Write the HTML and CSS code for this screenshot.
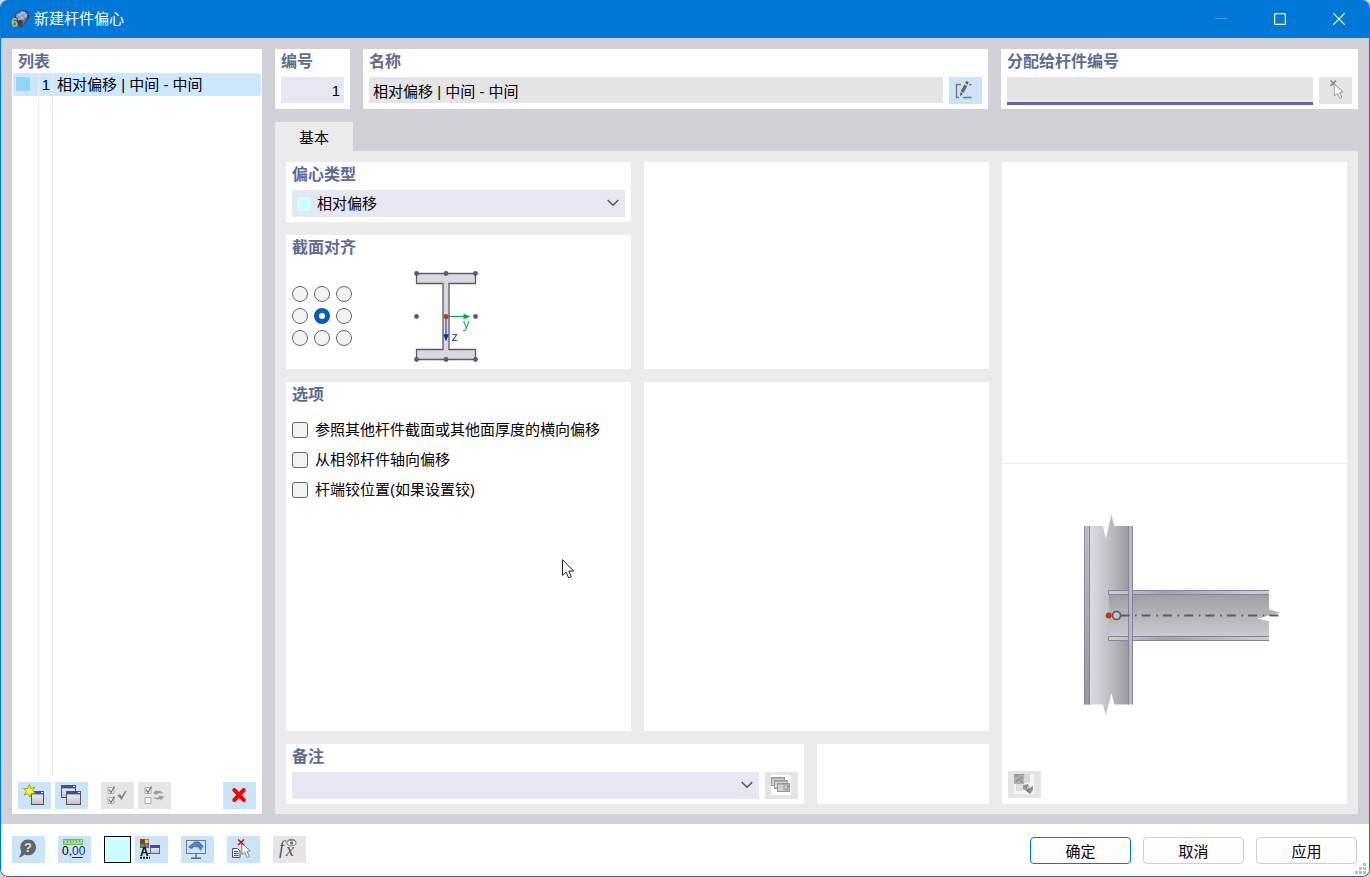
FILE: index.html
```html
<!DOCTYPE html>
<html lang="zh-CN">
<head>
    <meta charset="UTF-8">
    <meta name="viewport" content="width=device-width, initial-scale=1.0">
    <title>新建杆件偏心</title>
    <link rel="stylesheet" href="styles.css">
</head>
<body>
    <div class="window">
        <header class="titlebar">
            <svg class="app-icon" width="20" height="20" viewBox="0 0 20 20">
                <path d="M5 5L11.5 0.7L17.5 2.5L19.5 8L17 11.5L12 18.5L9 17L4.5 10Z" fill="#2d3f63"/>
                <path d="M6 5.5L12 1.8L16.5 3.5L17.5 8L13 11.5L8 11Z" fill="#8497bd"/>
                <path d="M8 4.5L14 10.5M11 2.5L17 7.5M6 8L15 3M8 11L17.5 5.5" stroke="#c3d0e6" stroke-width="0.8" fill="none"/>
                <path d="M13 11.5L17.5 8.5L15.5 12L12 17.5Z" fill="#6d7480"/>
                <text class="app-digit" x="1" y="18">6</text>
            </svg>
            <h1>新建杆件偏心</h1>
            <div class="window-controls">
                <button type="button" aria-label="最小化" disabled>
                    <svg width="12" height="12" viewBox="0 0 12 12"><path d="M0 5.5H12" stroke="#3d96df"/></svg>
                </button>
                <button type="button" aria-label="最大化">
                    <svg width="12" height="12" viewBox="0 0 12 12"><rect x="0.6" y="0.6" width="10.8" height="10.8" rx="1" fill="none" stroke="#fff" stroke-width="1.2"/></svg>
                </button>
                <button type="button" aria-label="关闭">
                    <svg width="12" height="12" viewBox="0 0 12 12"><path d="M0.3 0.3L11.7 11.7M11.7 0.3L0.3 11.7" stroke="#fff" stroke-width="1.2"/></svg>
                </button>
            </div>
        </header>

        <div class="content">
            <aside class="panel sidebar">
                <h2 class="panel-title">列表</h2>
                <ul class="list">
                    <li class="list-row">
                        <span class="cell-color"><i></i></span>
                        <span class="cell-no">1</span>
                        <span class="cell-name">相对偏移 | 中间 - 中间</span>
                    </li>
                </ul>
                <div class="list-tools">
                    <button type="button" class="icon-btn" aria-label="新建">
                        <svg viewBox="0 0 33 27">
                            <defs>
                                <linearGradient id="win" x1="0" y1="0" x2="0" y2="1">
                                    <stop offset="0" stop-color="#fafafa"/>
                                    <stop offset="1" stop-color="#c0c0c0"/>
                                </linearGradient>
                            </defs>
                            <rect x="13.5" y="9.5" width="12" height="13" fill="url(#win)" stroke="#555"/>
                            <rect x="13" y="9" width="13" height="3.4" fill="#3a50a8"/>
                            <rect x="23" y="10" width="2" height="1" fill="#fff"/>
                            <path d="M11.3 2.5L12.7 6.6L16.6 5L14.6 8.7L17.6 11.2L13.4 11.3L12 15L10.2 11.7L6.2 13L8.5 9.3L5.5 6.5L9.8 6.6Z" fill="#ffff20" stroke="#8c8c20" stroke-width="0.8"/>
                        </svg>
                    </button>
                    <button type="button" class="icon-btn" aria-label="复制">
                        <svg viewBox="0 0 33 27">
                            <rect x="6.5" y="3.5" width="14" height="12" fill="url(#win)" stroke="#555"/>
                            <rect x="6" y="3" width="15" height="3.4" fill="#3a50a8"/>
                            <rect x="18" y="4" width="2" height="1" fill="#fff"/>
                            <rect x="11.5" y="9.5" width="14" height="13" fill="url(#win)" stroke="#555"/>
                            <rect x="11" y="9" width="15" height="3.4" fill="#3a50a8"/>
                            <rect x="23" y="10" width="2" height="1" fill="#fff"/>
                        </svg>
                    </button>
                    <button type="button" class="icon-btn off gap-left" aria-label="全选" disabled>
                        <svg viewBox="0 0 33 27" fill="none">
                            <path d="M7 5.5H13V11.5H7ZM7 15.5H13V21.5H7Z" fill="#f4f4f4" stroke="#aaa"/>
                            <path d="M8 7.5L10 10.5L13.5 4.5M8 17.5L10 20.5L13.5 14.5" stroke="#777" stroke-width="1.3"/>
                            <path d="M16.5 13.5L19 12L20.5 14.5L24.5 8.5L25.5 9.5L20.5 18Z" fill="#858585"/>
                        </svg>
                    </button>
                    <button type="button" class="icon-btn off" aria-label="反选" disabled>
                        <svg viewBox="0 0 33 27" fill="none">
                            <path d="M7 5.5H13V11.5H7ZM7 15.5H13V21.5H7Z" fill="#f4f4f4" stroke="#aaa"/>
                            <path d="M8 7.5L10 10.5L13.5 4.5" stroke="#777" stroke-width="1.3"/>
                            <path d="M15 11.5L18.5 7.5V9.5C21 8.5 24 9 25 11.5C22.5 10.5 20.5 11 19 11.5L20.5 13Z" fill="#999"/>
                            <path d="M26 14.5L22.5 18.8V16.8C20 18 17 17.5 15.5 15C18 16 20 15.7 21.5 15L20 13.5Z" fill="#999"/>
                        </svg>
                    </button>
                    <button type="button" class="icon-btn push-right" aria-label="删除">
                        <svg viewBox="0 0 33 27"><path d="M11.3 8L20.8 18M20.8 8L11.3 18" stroke="#f00" stroke-width="4" stroke-linecap="round"/></svg>
                    </button>
                </div>
            </aside>

            <main class="main">
                <div class="top-row">
                    <section class="panel">
                        <label class="panel-title" for="number">编号</label>
                        <input class="field number" id="number" type="text" value="1">
                    </section>
                    <section class="panel">
                        <label class="panel-title" for="name">名称</label>
                        <div class="field-row">
                            <input class="field readonly" id="name" type="text" value="相对偏移 | 中间 - 中间" readonly>
                            <button type="button" class="icon-btn" aria-label="编辑名称">
                                <svg viewBox="0 0 33 27" fill="none">
                                    <path d="M12 7.5H7.5V20.5H10M14 20.5H22.5M20 7.5H22.5" stroke="#777" stroke-width="1.4"/>
                                    <path d="M15.5 7.5L18.3 9L14.5 16L11.6 14.3Z" fill="#666"/>
                                    <path d="M16.2 6L17.4 4L19.6 5.3L18.8 7.5ZM11.3 15.3L13.7 16.7L11.2 19.5Z" fill="#555"/>
                                </svg>
                            </button>
                        </div>
                    </section>
                    <section class="panel">
                        <label class="panel-title" for="assigned">分配给杆件编号</label>
                        <div class="field-row">
                            <input class="field readonly underlined" id="assigned" type="text">
                            <button type="button" class="icon-btn off" aria-label="选择杆件" disabled>
                                <svg viewBox="0 0 33 27">
                                    <path d="M11.5 3.5L17 9M17 3.5L11.5 9" stroke="#888" stroke-width="1.6"/>
                                    <path d="M15 7L15.5 19L18.3 16.5L21 21.5L23 20.3L20.5 15.5L24 15Z" fill="#fff" stroke="#999"/>
                                </svg>
                            </button>
                        </div>
                    </section>
                </div>

                <div class="tabs" role="tablist">
                    <button type="button" class="tab" role="tab" aria-selected="true">基本</button>
                </div>

                <div class="page">
                    <section class="panel type">
                        <label class="panel-title" for="type">偏心类型</label>
                        <div class="field select-box">
                            <i class="swatch"></i>
                            <select id="type"><option>相对偏移</option></select>
                            <svg class="chevron" width="12" height="8" viewBox="0 0 12 8"><path d="M0.7 1L6 6.3L11.3 1" fill="none" stroke="#555" stroke-width="1.4"/></svg>
                        </div>
                    </section>

                    <section class="panel align">
                        <h2 class="panel-title">截面对齐</h2>
                        <div class="align-body">
                            <div class="radio-grid" role="radiogroup" aria-label="截面对齐">
                                <input type="radio" name="align" aria-label="左上">
                                <input type="radio" name="align" aria-label="中上">
                                <input type="radio" name="align" aria-label="右上">
                                <input type="radio" name="align" aria-label="左中">
                                <input type="radio" name="align" aria-label="中间" checked>
                                <input type="radio" name="align" aria-label="右中">
                                <input type="radio" name="align" aria-label="左下">
                                <input type="radio" name="align" aria-label="中下">
                                <input type="radio" name="align" aria-label="右下">
                            </div>
                            <svg width="90" height="106" viewBox="0 0 90 106">
                                <path d="M16.5 10.5H75.5V20.5H49V86.5H75.5V96.5H16.5V86.5H43V20.5H16.5Z" fill="#dadade" stroke="#5c5a70" stroke-width="1.3"/>
                                <g fill="#5c5a70">
                                    <circle cx="16.5" cy="10.5" r="2.4"/><circle cx="46" cy="10.5" r="2.4"/><circle cx="75.5" cy="10.5" r="2.4"/>
                                    <circle cx="16.5" cy="53.5" r="2.4"/><circle cx="75.5" cy="53.5" r="2.4"/>
                                    <circle cx="16.5" cy="96.5" r="2.4"/><circle cx="46" cy="96.5" r="2.4"/><circle cx="75.5" cy="96.5" r="2.4"/>
                                </g>
                                <path d="M48 53.5H65" stroke="#00a84a" stroke-width="1.2"/>
                                <path d="M63.5 50.7L70.5 53.5L63.5 56.3Z" fill="#00a84a"/>
                                <path d="M46 55V72" stroke="#7088dc" stroke-width="2"/>
                                <path d="M43.3 71.3H48.7L46 78.5Z" fill="#0032c8"/>
                                <circle cx="46" cy="53.5" r="2.5" fill="#cc3300"/>
                                <text class="axis-y" x="63" y="65">y</text>
                                <text class="axis-z" x="51.5" y="78">z</text>
                            </svg>
                        </div>
                    </section>

                    <section class="panel blank-top"></section>

                    <section class="panel options">
                        <h2 class="panel-title">选项</h2>
                        <label class="check"><input type="checkbox">参照其他杆件截面或其他面厚度的横向偏移</label>
                        <label class="check"><input type="checkbox">从相邻杆件轴向偏移</label>
                        <label class="check"><input type="checkbox">杆端铰位置(如果设置铰)</label>
                        <svg class="pointer" width="13" height="20" viewBox="0 0 13 20"><path d="M0.5 0.7V16.3L4.1 13L6.6 18.8L9.2 17.7L6.8 12.1H11.7Z" fill="#fff" stroke="#1b1b2b"/></svg>
                    </section>

                    <section class="panel blank-mid"></section>

                    <div class="bottom-row">
                        <section class="panel comment">
                            <label class="panel-title" for="comment">备注</label>
                            <div class="field-row">
                                <div class="field select-box">
                                    <select id="comment"><option></option></select>
                                    <svg class="chevron" width="12" height="8" viewBox="0 0 12 8"><path d="M0.7 1L6 6.3L11.3 1" fill="none" stroke="#555" stroke-width="1.4"/></svg>
                                </div>
                                <button type="button" class="icon-btn off" aria-label="备注库" disabled>
                                    <svg viewBox="0 0 33 27">
                                        <rect x="6" y="3" width="20" height="20" fill="#fff"/>
                                        <g fill="#d2d2d2" stroke="#999">
                                            <rect x="6.5" y="5.5" width="13" height="8"/>
                                            <rect x="9.5" y="8.5" width="13" height="8"/>
                                            <rect x="12.5" y="11.5" width="12" height="8"/>
                                        </g>
                                        <path d="M7 6.5H19M10 9.5H22M13 12.5H24" stroke="#b0b0b0"/>
                                        <rect x="19" y="14" width="4" height="4" fill="#eee" stroke="#888" stroke-width="0.8"/>
                                        <path d="M19.5 15.5L21 17.5L24 13" fill="none" stroke="#888"/>
                                    </svg>
                                </button>
                            </div>
                        </section>
                        <section class="panel blank-small"></section>
                    </div>

                    <section class="panel preview">
                        <div class="preview-top"></div>
                        <div class="preview-drawing">
                            <svg width="240" height="230" viewBox="-5 0 240 230">
                                <defs>
                                    <linearGradient id="colWeb">
                                        <stop offset="0" stop-color="#dcdbe1"/>
                                        <stop offset="0.45" stop-color="#c3c2c8"/>
                                        <stop offset="1" stop-color="#9a999e"/>
                                    </linearGradient>
                                    <linearGradient id="colLeft" x1="0" y1="0" x2="0" y2="1">
                                        <stop offset="0" stop-color="#c8c7cd"/>
                                        <stop offset="1" stop-color="#96959c"/>
                                    </linearGradient>
                                    <linearGradient id="beamWeb" x1="0" y1="0" x2="0" y2="1">
                                        <stop offset="0" stop-color="#9f9ea3"/>
                                        <stop offset="1" stop-color="#cbcad0"/>
                                    </linearGradient>
                                    <linearGradient id="flangeTop">
                                        <stop offset="0" stop-color="#cfced4"/>
                                        <stop offset="0.35" stop-color="#a3a2a8"/>
                                        <stop offset="1" stop-color="#cfced4"/>
                                    </linearGradient>
                                </defs>
                                <path d="M30 26H43L45.7 38.5L51.5 14.5L54.3 26H68.7V204.5H54.3L51.5 193L45.7 216L43 204.5H30Z" fill="url(#colWeb)"/>
                                <rect x="24" y="26" width="6" height="178.5" fill="url(#colLeft)"/>
                                <path d="M24.5 26V204.5M29.5 26V204.5" stroke="#85839a"/>
                                <path d="M27 26V204.5" stroke="#a09fac" stroke-width="0.8"/>
                                <path d="M49 94.5H209V109.5L220.5 112.7L209 115.5L198 118.5L209 121V136.5H49Z" fill="url(#beamWeb)"/>
                                <path d="M209 90.5H48.5V94.5H209Z" fill="url(#flangeTop)"/>
                                <path d="M209 136.5H48.5V140.5H209Z" fill="url(#flangeTop)"/>
                                <path d="M209 90.5H48.5V94.5H209M209 136.5H48.5V140.5H209" fill="none" stroke="#85839a"/>
                                <rect x="68.5" y="26" width="4" height="178.5" fill="#bab9c0"/>
                                <path d="M68.5 26V204.5M72.5 26V204.5" stroke="#85839a"/>
                                <path d="M61 115.5H69.5" stroke="#5c5a70" stroke-width="2"/>
                                <path d="M75 115.5H219" stroke="#5c5a70" stroke-width="2" stroke-dasharray="1.6 5 9 5.7"/>
                                <path d="M197 118.5L211 116.5L209 121Z" fill="#fff"/>
                                <circle cx="48.7" cy="115.5" r="3" fill="#cc3300"/>
                                <circle cx="56.5" cy="115.5" r="4" fill="#c4c3c9" stroke="#5c5a70" stroke-width="1.7"/>
                            </svg>
                        </div>
                        <button type="button" class="icon-btn off" aria-label="视图设置" disabled>
                            <svg viewBox="0 0 33 27">
                                <rect x="6" y="3" width="20" height="20" fill="#f4f4f4"/>
                                <rect x="16" y="3" width="6" height="9" fill="#d8d8d8"/>
                                <rect x="8" y="13" width="8" height="7" fill="#dedede"/>
                                <rect x="6" y="3" width="10" height="10" fill="#b0b0b0"/>
                                <path d="M7 5H10M12 6.5H15M8 11L11 8L15 12" stroke="#909090" fill="none" stroke-width="1.4"/>
                                <path d="M6 3.5H16" stroke="#999"/>
                                <path d="M15 14L20 13L22 17L25 14.5L25 19L22 23L18 20L15 18Z" fill="#9a9a9a"/>
                                <path d="M18 15L20 19L24 17M19 20L23 21.5" stroke="#757575" fill="none"/>
                                <rect x="19" y="15.5" width="3" height="2" fill="#d0d0d0"/>
                            </svg>
                        </button>
                    </section>
                </div>
            </main>
        </div>

        <footer class="footer">
            <div class="footer-tools">
                <button type="button" class="icon-btn" aria-label="帮助">
                    <svg viewBox="0 0 33 27">
                        <path d="M16.3 3.5C21 3.5 24 7 24 11.5C24 16 20.5 19.3 16.3 19.3C14.8 19.3 13.5 19 12.5 18.4C11 20 9 21 6.8 21.3C8 19.5 9 17.5 9.2 15.5C8.6 14.3 8.3 13 8.3 11.5C8.3 7 11.5 3.5 16.3 3.5Z" fill="#666"/>
                        <text class="help-mark" x="12" y="16">?</text>
                    </svg>
                </button>
                <button type="button" class="icon-btn" aria-label="单位和小数位">
                    <svg viewBox="0 0 33 27">
                        <rect x="5.5" y="3.5" width="19" height="5" fill="#a0e08c" stroke="#73b564"/>
                        <path d="M9.5 4V6.5M12.5 4V6.5M15.5 4V6.5M18.5 4V6.5M21.5 4V6.5" stroke="#5f9f52" stroke-width="0.8"/>
                        <text class="digits" x="4" y="19">0,<tspan class="decimals">00</tspan></text>
                        <path d="M14 21.5H25" stroke="#1b2f80"/>
                    </svg>
                </button>
                <button type="button" class="color-btn" aria-label="颜色"></button>
                <button type="button" class="icon-btn tight" aria-label="显示属性">
                    <svg viewBox="0 0 33 27">
                        <rect x="5" y="3" width="9" height="9" fill="#555"/>
                        <rect x="5.5" y="3.5" width="3.6" height="3.6" fill="#f00"/><rect x="9.9" y="3.5" width="3.6" height="3.6" fill="#e8e800"/>
                        <rect x="5.5" y="7.9" width="3.6" height="3.6" fill="#00c828"/><rect x="9.9" y="7.9" width="3.6" height="3.6" fill="#d838e8"/>
                        <text class="letter" x="5" y="20">A</text>
                        <path d="M5 21.8H15" stroke="#222" stroke-width="2" stroke-dasharray="2 1"/>
                        <path d="M13 17.5H24" stroke="#333"/>
                        <rect x="15.5" y="9.5" width="9" height="8" fill="url(#win)" stroke="#666"/>
                        <rect x="15" y="9" width="10" height="3" fill="#3a50a8"/>
                    </svg>
                </button>
                <button type="button" class="icon-btn" aria-label="视图">
                    <svg viewBox="0 0 33 27">
                        <rect x="5.5" y="4.5" width="19" height="13" fill="#cce4f7" stroke="#777"/>
                        <path d="M15 18V22M10 22.3H20" stroke="#666" stroke-width="1.4"/>
                        <path d="M7 11L13.5 5.5H18L22.5 10L19.5 15L17.5 11.5L13 11L10.5 13Z" fill="#4978b0"/>
                        <path d="M9 10L14.5 9.5L20 14M11 7.5L17 8L21.5 12" fill="none" stroke="#85addb" stroke-width="0.5"/>
                    </svg>
                </button>
                <button type="button" class="icon-btn" aria-label="取消选择">
                    <svg viewBox="0 0 33 27">
                        <path d="M5.5 12.5H10.5L13 15V21.5H5.5Z" fill="#eee" stroke="#555"/>
                        <path d="M7 15.5H11M7 17.5H11.5M7 19.5H11.5" stroke="#555"/>
                        <path d="M14.5 7L15 18.5L17.7 16.3L20.3 21.5L22.3 20.5L20 15.5L23.3 15Z" fill="#fff" stroke="#777" stroke-width="0.9"/>
                        <path d="M11 3.5L17 9M17 3.5L11 9" stroke="#e00000" stroke-width="1.5"/>
                    </svg>
                </button>
                <button type="button" class="icon-btn off" aria-label="公式" disabled>
                    <svg viewBox="0 0 33 27">
                        <text class="formula" x="6" y="18">f</text>
                        <text class="formula" x="13" y="20">x</text>
                        <ellipse cx="18.5" cy="7" rx="4.6" ry="2.8" fill="#eee" stroke="#777"/>
                        <circle cx="18.5" cy="7" r="1.7" fill="#777"/>
                        <path d="M14.5 4.5Q18.5 1.5 22.5 4.5" fill="none" stroke="#777"/>
                    </svg>
                </button>
            </div>
            <div class="dialog-buttons">
                <button type="button" class="dialog-btn primary">确定</button>
                <button type="button" class="dialog-btn">取消</button>
                <button type="button" class="dialog-btn">应用</button>
            </div>
            <svg class="grip" width="11" height="11" viewBox="0 0 11 11"><path d="M8 0h3v3h-3zM4 4h3v3h-3zM8 4h3v3h-3zM0 8h3v3h-3zM4 8h3v3h-3zM8 8h3v3h-3z" fill="#bcbcbc"/></svg>
        </footer>
    </div>
</body>
</html>
```

FILE: styles.css
```css
* {
    margin: 0;
    padding: 0;
    box-sizing: border-box;
}

body {
    font-family: "Liberation Sans", "Noto Sans CJK SC", sans-serif;
    font-size: 15px;
    line-height: 24px;
    color: #000;
    background: #d4d6da;
}

button,
input,
select {
    font: inherit;
    color: inherit;
    border: none;
    outline: none;
}

svg {
    display: block;
}

.window {
    min-height: 100vh;
    display: flex;
    flex-direction: column;
    background: #d1d0d6;
    border: 1px solid #0078d7;
    border-top: none;
    border-radius: 8px;
    overflow: hidden;
}

/* title bar */
.titlebar {
    display: flex;
    align-items: center;
    height: 38px;
    padding: 0 1px 0 9px;
    background: #0078d7;
    color: #fff;
}

.titlebar h1 {
    margin-left: 4px;
    font-size: 15px;
    font-weight: normal;
}

.app-digit {
    font: bold 12px/12px "Liberation Sans", sans-serif;
    fill: #e0b030;
}

.window-controls {
    display: flex;
    margin-left: auto;
}

.window-controls button {
    display: flex;
    align-items: center;
    justify-content: center;
    width: 59px;
    height: 38px;
    background: none;
}

/* layout */
.content {
    flex: 1;
    display: grid;
    grid-template-columns: 250px 1fr;
    gap: 13px;
    padding: 11px 11px 10px;
}

.panel {
    position: relative;
    padding: 0 6px;
    background: #fff;
}

.panel-title {
    display: block;
    padding-top: 1px;
    margin-bottom: 3px;
    font-size: 16px;
    font-weight: bold;
    line-height: 24px;
    color: #5f6b8f;
}

.main {
    display: flex;
    flex-direction: column;
    min-width: 0;
}

.top-row {
    display: grid;
    grid-template-columns: 75px 1fr 357px;
    gap: 13px;
    height: 60px;
    margin-bottom: 13px;
}

/* list */
.sidebar {
    display: flex;
    flex-direction: column;
    padding: 0 1px 5px;
}

.sidebar .panel-title {
    padding-left: 5px;
    margin-bottom: 0;
    line-height: 23px;
}

.list {
    flex: 1;
    margin-bottom: 6px;
    list-style: none;
    background: linear-gradient(#ebebeb, #ebebeb) 25px 0 / 1px 100% no-repeat,
        linear-gradient(#ebebeb, #ebebeb) 39px 0 / 1px 100% no-repeat;
}

.list-row {
    display: grid;
    grid-template-columns: 26px 14px 1fr;
    height: 23px;
    border-radius: 2px;
    background: #cce8ff;
}

.cell-color,
.cell-no {
    border-right: 1px solid #ebebeb;
}

.cell-color i {
    display: block;
    width: 14px;
    height: 14px;
    margin: 4px 3px;
    background: #90d7f5;
}

.cell-no {
    padding-right: 2px;
    text-align: right;
}

.cell-name {
    padding-left: 4px;
    white-space: nowrap;
}

.list-tools {
    display: flex;
    gap: 4px;
    padding: 0 5px;
}

.gap-left {
    margin-left: 9px;
}

.push-right {
    margin-left: auto;
}

/* buttons and fields */
.icon-btn {
    flex: none;
    width: 33px;
    height: 27px;
    background: #cce4f7;
}

.icon-btn.off {
    background: #e5e5e5;
}

.icon-btn svg {
    width: 33px;
    height: 27px;
}

.field-row {
    display: flex;
    gap: 6px;
}

.field {
    width: 100%;
    min-width: 0;
    height: 26px;
    padding: 0 4px;
    background: #e7e7f2;
}

.number {
    text-align: right;
}

.readonly {
    background: #e5e5e5;
}

.underlined {
    height: 28px;
    border-bottom: 3px solid #6565a8;
}

.select-box {
    position: relative;
    display: flex;
    align-items: center;
    gap: 6px;
    height: 27px;
    padding: 0 0 0 5px;
}

.select-box select {
    flex: 1;
    height: 27px;
    background: transparent;
    appearance: none;
}

.swatch {
    width: 14px;
    height: 14px;
    background: #ccffff;
}

.chevron {
    position: absolute;
    right: 6px;
    top: 9px;
    pointer-events: none;
}

/* tab page */
.tab {
    height: 29px;
    padding: 2px 24px 0;
    background: #ebebeb;
}

.tabs {
    display: flex;
}

.page {
    flex: 1;
    display: grid;
    grid-template-columns: 1fr 1fr 1fr;
    grid-template-rows: 60px 134px 1fr 60px;
    grid-template-areas:
        "type top preview"
        "align top preview"
        "options mid preview"
        "bottom bottom preview";
    gap: 13px;
    padding: 11px 11px 10px;
    background: #ebebeb;
}

.type { grid-area: type; }
.align { grid-area: align; }
.blank-top { grid-area: top; }
.options { grid-area: options; }
.blank-mid { grid-area: mid; }

.bottom-row {
    grid-area: bottom;
    display: grid;
    grid-template-columns: 3fr 1fr;
    gap: 13px;
}

.align-body {
    display: flex;
    align-items: center;
    gap: 48px;
}

.radio-grid {
    display: grid;
    grid-template-columns: repeat(3, 16px);
    gap: 6px;
}

input[type="radio"],
input[type="checkbox"] {
    width: 16px;
    height: 16px;
    border: 1px solid #666;
    background: #f3f3f3;
    appearance: none;
}

input[type="radio"] {
    border-radius: 50%;
}

input[type="checkbox"] {
    border-radius: 3px;
}

input[type="radio"]:checked {
    border: 5px solid #005fb8;
    background: #fff;
}

input[type="checkbox"]:checked {
    background: #005fb8;
}

.axis-y,
.axis-z {
    font: 13px "Open Sans", sans-serif;
}

.axis-y { fill: #00a84a; }
.axis-z { fill: #0032c8; }

.options .panel-title {
    margin-bottom: 8px;
}

.check {
    display: flex;
    align-items: center;
    gap: 7px;
    height: 30px;
}

.pointer {
    position: absolute;
    left: 276px;
    top: 177px;
}

/* preview */
.preview {
    grid-area: preview;
    display: flex;
    flex-direction: column;
    gap: 6px;
    padding-bottom: 6px;
}

.preview-top {
    flex: 1;
    margin: 0 -6px -6px;
    border-bottom: 1px solid #ebebeb;
}

.preview-drawing {
    flex: 1;
    display: flex;
    align-items: center;
    justify-content: center;
}

/* footer */
.footer {
    position: relative;
    display: flex;
    justify-content: space-between;
    height: 52px;
    padding: 12px 12px 0 11px;
    background: #fff;
}

.footer-tools {
    display: flex;
    gap: 13px;
}

.color-btn {
    width: 27px;
    height: 27px;
    border: 1px solid #000;
    background: #ccffff;
}

.tight {
    margin-left: -9px;
}

.help-mark {
    font: bold 13px "Liberation Sans", sans-serif;
    fill: #cce4f7;
}

.digits {
    font: 12px "Liberation Sans", sans-serif;
}

.decimals {
    fill: #1b2f80;
}

.letter {
    font: bold 12px "Liberation Sans", sans-serif;
}

.formula {
    font: italic 18px "Liberation Serif", serif;
    fill: #555;
}

.dialog-buttons {
    display: flex;
    gap: 12px;
    padding-top: 1px;
}

.dialog-btn {
    width: 101px;
    height: 27px;
    padding-top: 2px;
    border: 1px solid #d0d0d0;
    border-radius: 4px;
    background: #fdfdfd;
}

.dialog-btn.primary {
    border-color: #0078d4;
}

.grip {
    position: absolute;
    right: 3px;
    bottom: 2px;
}
```
